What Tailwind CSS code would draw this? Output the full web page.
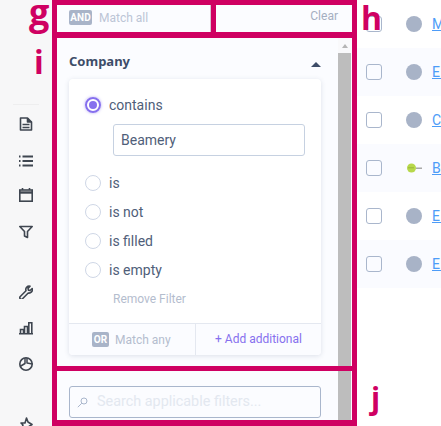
<!doctype html>
<html lang="en">
<head>
<meta charset="utf-8">
<script src="https://cdn.jsdelivr.net/npm/@tailwindcss/browser@4"></script>
<title>Filters</title>
</head>
<body class="relative flex h-[426px] w-[441px] overflow-hidden bg-white font-['Roboto',sans-serif]">
  <aside class="flex h-[426px] w-[52px] shrink-0 flex-col items-center overflow-hidden bg-[#f7f7f8] pt-[104px] text-[#3f4650]">
    <div class="h-px w-[26px] shrink-0 bg-[#eeeeef]"></div>
    <svg class="mt-3 size-[14px] shrink-0" viewBox="0 0 14 14" fill="none" stroke="currentColor" stroke-width="1.600" stroke-linejoin="round"><path d="M1.500 1h7l4 4v8h-11z"/><path d="M8.500 1v4h4" fill="currentColor"/><path d="M3.500 7.500h7M3.500 10.500h7" stroke-width="1.400"/></svg>
    <svg class="mt-[23px] size-[14px] shrink-0" viewBox="0 0 14 14" fill="none" stroke="currentColor" stroke-width="2"><path d="M0 2.500h1.500M0 7h1.500M0 11.500h1.500M3.500 2.500h10.500M3.500 7h10.500M3.500 11.500h10.500"/></svg>
    <svg class="mt-5 size-[14px] shrink-0" viewBox="0 0 14 14" fill="none" stroke="currentColor" stroke-width="1.600"><rect x=".8" y="2" width="12.400" height="11.200"/><path d="M.8 4.500h12.400" stroke-width="2.400"/><path d="M3.500 0v2M10.500 0v2"/></svg>
    <svg class="mt-[23px] size-[14px] shrink-0" viewBox="0 0 14 14" fill="none" stroke="currentColor" stroke-width="1.600" stroke-linejoin="round"><path d="M.8 1.500h12.400l-4.700 5v6l-3-1.500v-4.500z"/></svg>
    <svg class="mt-[46px] size-[14px] shrink-0" viewBox="0 0 14 14" fill="none" stroke="currentColor" stroke-width="1.600" stroke-linejoin="round"><path d="M13.200 3.500l-2.200 2-1.600-.4-.4-1.700 2-2.200a3.500 3.500 0 0 0-4 4.600l-5.700 5.700a1.500 1.500 0 0 0 2.200 2.200l5.700-5.700a3.500 3.500 0 0 0 4-4.500z"/></svg>
    <svg class="mt-[22px] size-[14px] shrink-0" viewBox="0 0 14 14" fill="none" stroke="currentColor" stroke-width="1.600" stroke-linejoin="miter"><path d="M0 12.800h14M1.500 12.800v-4.300h3v4.300M5.500 12.800v-7.300h3v7.300M9.800 12.800v-11h3v11"/></svg>
    <svg class="mt-[22px] size-[14px] shrink-0" viewBox="0 0 14 14" fill="none" stroke="currentColor" stroke-width="1.600" stroke-linejoin="round"><circle cx="7" cy="7" r="6.200"/><path d="M6 .9v5.600l-5 3M8 1v5l5.500 1" stroke-width="1.500"/></svg>
    <svg class="mt-[46px] size-[14px] shrink-0" viewBox="0 0 14 14" fill="none" stroke="currentColor" stroke-width="1.600" stroke-linejoin="round"><path d="M7.500 1l1.500 4 4 2.500-3 2v3.500l-3-2.500-5 2.500 2-5-2-2h4z"/></svg>
  </aside>

  <section class="flex h-[426px] w-[305px] shrink-0 flex-col border-x-[5px] border-t-[5px] border-b-[6px] border-[#cf0062] bg-[#cf0062]">
    <div class="flex h-[27px] gap-[5px]">
      <div class="flex w-[154px] items-center gap-[7px] border-r border-[#d9c2d0] bg-[#fbfcff] pb-[2px] pl-3 text-xs text-[#bcc5d6]">
        <span class="flex h-[15px] w-[23px] items-center justify-center rounded-[2px] bg-[#a9b4c8] text-[10px] font-bold text-white">AND</span>
        <span>Match all</span>
      </div>
      <div class="flex w-[136px] items-center justify-end bg-[#fbfcff] pb-[5px] pr-[14px] text-xs text-[#a5afc1]">Clear</div>
    </div>

    <div class="mt-[6px] flex h-[328px] bg-[#fbfcff]">
      <div class="flex w-[281px] flex-col pl-3 pr-[17px]">
        <div class="flex h-[41px] items-center justify-between pt-[7px]">
          <span class="font-['Noto_Sans',sans-serif] text-[13px] font-bold text-[#3d4c68]">Company</span>
          <span class="mt-[5px] h-0 w-0 border-x-[5px] border-b-[5px] border-x-transparent border-b-[#3d4c68]"></span>
        </div>
        <div class="flex h-[276px] flex-col overflow-hidden rounded bg-white shadow-[0_1px_5px_rgba(60,80,120,0.16)]">
          <div class="mt-[18px] ml-4 flex h-4 items-center gap-2 text-sm text-[#4f5e79]">
            <span class="flex size-4 items-center justify-center rounded-full border-2 border-[#8670ee] shadow-[0_0_3px_rgba(134,112,238,0.6)]"><span class="size-2 rounded-full bg-[#8670ee]"></span></span>
            <span>contains</span>
          </div>
          <div class="mt-[11px] ml-11 flex h-8 w-[192px] items-center rounded-[3px] border border-[#c6d1e1] pl-[7px] text-sm text-[#4f5e79]">Beamery</div>
          <div class="mt-[19px] ml-4 flex flex-col gap-[13px] text-sm text-[#4f5e79]">
            <div class="flex h-4 items-center gap-2"><span class="size-4 rounded-full border border-[#cfd7e6]"></span><span>is</span></div>
            <div class="flex h-4 items-center gap-2"><span class="size-4 rounded-full border border-[#cfd7e6]"></span><span>is not</span></div>
            <div class="flex h-4 items-center gap-2"><span class="size-4 rounded-full border border-[#cfd7e6]"></span><span>is filled</span></div>
            <div class="flex h-4 items-center gap-2"><span class="size-4 rounded-full border border-[#cfd7e6]"></span><span>is empty</span></div>
          </div>
          <div class="mt-[13px] ml-11 text-xs leading-4 text-[#b4bdce]">Remove Filter</div>
          <div class="mt-auto flex h-8 border-t border-[#e4e8f0] bg-[#fbfcff] text-xs">
            <div class="flex w-[127px] items-center gap-[6px] border-r border-[#e4e8f0] pl-[23px] text-[#b4bdce]">
              <span class="flex h-[15px] w-[17px] items-center justify-center rounded-[2px] bg-[#a9b4c8] text-[10px] font-bold text-white">OR</span>
              <span>Match any</span>
            </div>
            <div class="flex flex-1 items-center justify-center pb-[2px] text-[#8670ee]">+ Add additional</div>
          </div>
        </div>
      </div>
      <div class="flex w-[13px] flex-col bg-[#f9f9fb]">
        <div class="flex h-[15px] items-center justify-center"><span class="h-0 w-0 border-x-[3.500px] border-b-[4px] border-x-transparent border-b-[#b5b5b5]"></span></div>
        <div class="flex-1 bg-[#bdbdbd]"></div>
      </div>
    </div>

    <div class="mt-[5px] flex h-[49px] bg-[#fbfcff]">
      <div class="w-[281px] pl-3 pr-[17px] pt-[15px]">
        <div class="flex h-[32px] items-center rounded-[3px] border border-[#a9b6cc] pl-[7px] text-[14.400px] text-[#e3e8f0]">
          <svg class="size-[11px] shrink-0" viewBox="0 0 11 11" fill="none" stroke="#a9b6cc" stroke-width="1"><circle cx="7" cy="4" r="3"/><path d="M4.800 6.200L.8 10.200"/></svg>
          <span class="ml-[9px]">Search applicable filters...</span>
        </div>
      </div>
      <div class="w-[13px] bg-[#bdbdbd]"></div>
    </div>
  </section>

  <main class="flex min-w-0 flex-1 flex-col text-sm">
    <div class="flex h-12 items-center bg-white pl-[9px]"><span class="size-4 shrink-0 rounded-[3px] border-[1.500px] border-[#a9b6cc]"></span><span class="ml-6 size-4 shrink-0 rounded-full bg-[#a8b3c7]"></span><a class="ml-[10px] text-[#4d9cf8] underline">M</a></div>
    <div class="flex h-12 items-center bg-[#fafbff] pl-[9px]"><span class="size-4 shrink-0 rounded-[3px] border-[1.500px] border-[#a9b6cc]"></span><span class="ml-6 size-4 shrink-0 rounded-full bg-[#a8b3c7]"></span><a class="ml-[10px] text-[#4d9cf8] underline">E&nbsp;</a></div>
    <div class="flex h-12 items-center bg-white pl-[9px]"><span class="size-4 shrink-0 rounded-[3px] border-[1.500px] border-[#a9b6cc]"></span><span class="ml-6 size-4 shrink-0 rounded-full bg-[#a8b3c7]"></span><a class="ml-[10px] text-[#4d9cf8] underline">C&nbsp;</a></div>
    <div class="flex h-12 items-center bg-[#fafbff] pl-[9px]"><span class="size-4 shrink-0 rounded-[3px] border-[1.500px] border-[#a9b6cc]"></span>
      <svg class="ml-6 size-4 shrink-0" viewBox="0 0 16 16"><circle cx="5.500" cy="8" r="4.500" fill="#b7d84b"/><path d="M2 7.800h6" stroke="#9ab53a" stroke-width="1"/><path d="M10 8.200h6" stroke="#9a9a9a" stroke-width="1.300"/></svg>
      <a class="ml-[10px] text-[#4d9cf8] underline">B&nbsp;</a></div>
    <div class="flex h-12 items-center bg-white pl-[9px]"><span class="size-4 shrink-0 rounded-[3px] border-[1.500px] border-[#a9b6cc]"></span><span class="ml-6 size-4 shrink-0 rounded-full bg-[#a8b3c7]"></span><a class="ml-[10px] text-[#4d9cf8] underline">E&nbsp;</a></div>
    <div class="flex h-12 items-center bg-[#fafbff] pl-[9px]"><span class="size-4 shrink-0 rounded-[3px] border-[1.500px] border-[#a9b6cc]"></span><span class="ml-6 size-4 shrink-0 rounded-full bg-[#a8b3c7]"></span><a class="ml-[10px] text-[#4d9cf8] underline">E&nbsp;</a></div>
  </main>

  <span class="absolute left-[29px] top-[-8px] font-['Open_Sans',sans-serif] text-[36px] leading-[40px] font-bold text-[#cf0062]">g</span>
  <span class="absolute left-[34px] top-[42px] font-['Open_Sans',sans-serif] text-[32px] leading-[40px] font-bold text-[#cf0062]">i</span>
  <span class="absolute left-[361px] top-[-2px] font-['Open_Sans',sans-serif] text-[32px] leading-[40px] font-bold text-[#cf0062]">h</span>
  <span class="absolute left-[371px] top-[378px] font-['Open_Sans',sans-serif] text-[30px] leading-[40px] font-bold text-[#cf0062]">j</span>
</body>
</html>
